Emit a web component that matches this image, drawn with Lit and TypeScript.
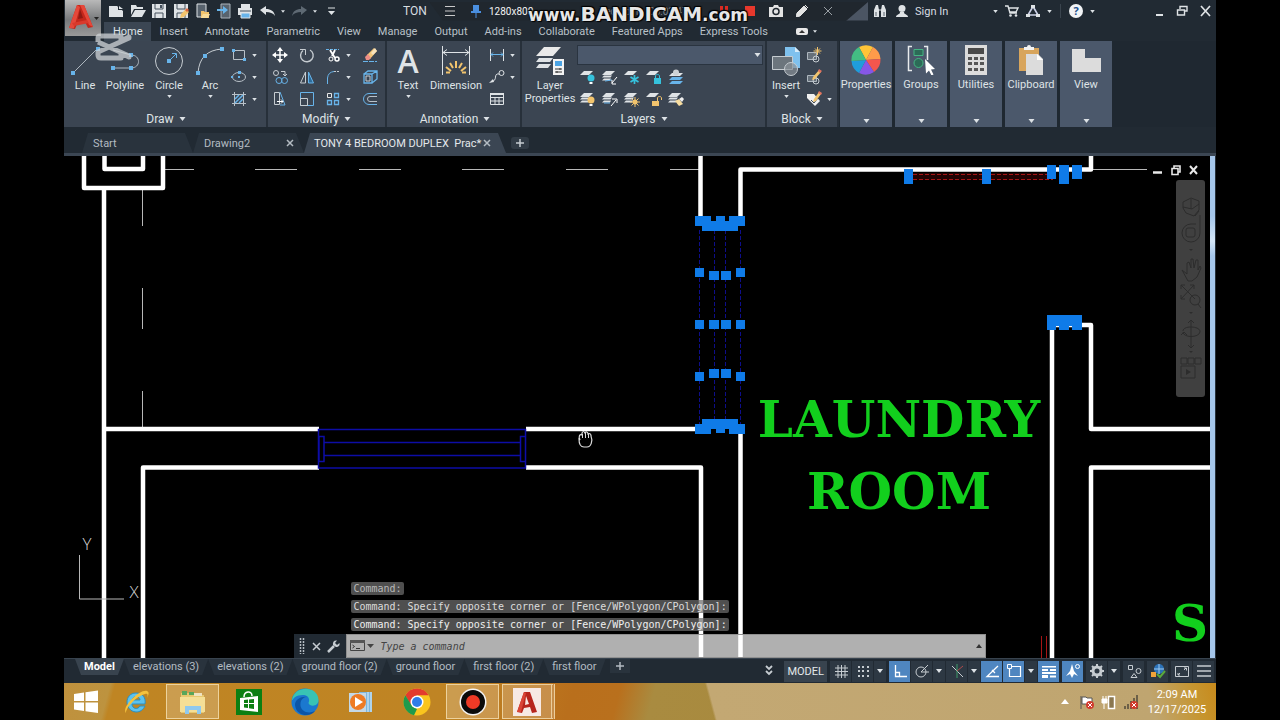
import { LitElement, html, svg, css, TemplateResult, SVGTemplateResult } from "lit";
import { customElement } from "lit/decorators.js";
import { classMap } from "lit/directives/class-map.js";

const icon = (w: number, h: number, body: SVGTemplateResult) =>
  html`<svg width=${w} height=${h} viewBox="0 0 ${w} ${h}" fill="none" aria-hidden="true">${body}</svg>`;

const caret = (w = 5) => html`<svg class="caret" width=${w} height=${w > 5 ? 4 : 3} viewBox="0 0 6 4" aria-hidden="true"><path d="M0 0h6L3 4z" fill="#dde2e6"/></svg>`;

const W = "#dfe3e6";
const B = "#68b4ea";
const Y = "#f2c46d";

/* ---------- shared pieces ---------- */
const sheets = (c = W) => svg`<path d="M4 2h9l-4 4H0z" fill="${c}"/><path d="M2 6.500h8l-1.500 2H0zM2 9.500h7l-1 2H0z" fill="${c}"/>`;
const sheet = svg`<path d="M4 2h9l-4 4H0z" fill="${W}"/>`;

const qat = {
  New: icon(16, 14, svg`<path d="M1 2h8l6 5v6H1z" fill="${W}"/><path d="M10 1v5h5" fill="#212a33"/><path d="M11 2v3h4z" fill="${W}"/>`),
  Open: icon(16, 14, svg`<path d="M1 1h5l1 2h6v2H4L1 11z" fill="${W}"/><path d="M5 6h11l-4 7H1z" fill="${W}"/>`),
  Save: icon(16, 16, svg`<path d="M1 1h14v14H1z" fill="${W}"/><path d="M4 1v5h8V1M4 15v-5h8v5" stroke="#44505c"/><path d="M9 2h2v3H9z" fill="#44505c"/>`),
  "Save As": icon(16, 16, svg`<path d="M1 1h14v14H1z" fill="${W}"/><path d="M4 1v5h8V1M4 15v-5h8v5" stroke="#44505c"/><path d="M7 15l1-4 5-5 3 3-5 5z" fill="${Y}"/><path d="M12 7l2-2 2 2-2 2z" fill="#d9653f"/>`),
  "Open from Web": icon(16, 16, svg`<path d="M3 1h9v13H3z" fill="#58636e" stroke="${W}"/><path d="M7 8h3l1 1h4v6H7z" fill="${Y}"/><path d="M9 11h7l-2 4H7z" fill="#f8dc9a"/>`),
  "Save to Web": icon(16, 16, svg`<path d="M5 1h9v14H5z" fill="#58636e" stroke="#aab3bb"/><path d="M1 6h6V3l5 4-5 4V8H1z" fill="${B}"/>`),
  Print: icon(16, 16, svg`<path d="M4 1h9v4H4z" fill="${W}"/><path d="M1 5h14v7H1z" fill="${W}"/><path d="M3 8h11" stroke="#44505c"/><path d="M4 10h9v5H4z" fill="${B}" stroke="${W}"/>`),
};

const undo = icon(15, 12, svg`<path d="M6 1v3c5 0 8 2 9 7-2-3-5-4-9-4v3L0 5z" fill="${W}"/>`);
const redo = icon(15, 12, svg`<path d="M9 1v3C4 4 1 6 0 11c2-3 5-4 9-4v3l6-5z" fill="#5e6973"/>`);

/* ---------- ribbon glyphs ---------- */
const big: Record<string, TemplateResult> = {
  Line: icon(30, 30, svg`<path d="M3 27L27 3" stroke="#aeb7bf"/><path d="M1 25h4v4H1zM26 1h4v4h-4z" fill="${B}"/>`),
  Polyline: icon(30, 30, svg`<path d="M3 22h18c10 0 10-13 0-13L3 4" stroke="#aeb7bf"/><path d="M1 20h4v4H1zM19 20h4v4h-4zM19 7h4v4h-4z" fill="${B}"/>`),
  Circle: icon(30, 30, svg`<circle cx="15" cy="15" r="13.500" stroke="#c6ccd1"/><path d="M15 15l7-7M18 7.500h4.500V12" stroke="${B}"/><path d="M13 13h4v4h-4z" fill="${B}"/>`),
  Arc: icon(30, 30, svg`<path d="M3 27C4 12 12 4 27 3" stroke="#c6ccd1"/><path d="M1 25h4v4H1zM8 8h4v4H8zM25 1h4v4h-4z" fill="${B}"/>`),
  Text: html`<span class="glyph-a">A</span>`,
  Dimension: icon(30, 30, svg`<path d="M1.500 0v29M28.500 0v29" stroke="${W}"/><path d="M2 6.500h26M6 3.500l-4 3 4 3M24 3.500l4 3-4 3" stroke="${W}"/><path d="M15 15v7M9 17l3 5M21 17l-3 5M5 21l5 4M25 21l-5 4M5 26.500h4M21 26.500h4" stroke="${Y}" stroke-width="2"/>`),
  "Layer Properties": icon(30, 30, svg`<path d="M9 1h17l-8 9H1z" fill="#e9e9e9"/><path d="M4 12h14l-3 4H1zM4 18h12l-3 4H1z" fill="${W}"/><path d="M18 13h11v16H18z" fill="#f3f3f3"/><path d="M20 15h7v5h-7z" fill="#4ba3e3"/><path d="M20 23h7M20 26h7M25 22v2M22 25v2" stroke="#333"/>`),
  Insert: icon(30, 30, svg`<path d="M14 1h10l5 5v16H14z" fill="#7fc1ee"/><path d="M24 1v5h5z" fill="#d7ecfa"/><path d="M1.500 10.500h20v13h-20z" fill="#6c757d" stroke="#c6ccd1"/><circle cx="20" cy="23" r="6.500" fill="#8a9299" fill-opacity=".7" stroke="#c6ccd1"/>`),
  Properties: icon(30, 30, svg`<path d="M15 15L8 2a15 15 0 0 1 14 0z" fill="#ffc438"/><path d="M15 15L22 2a15 15 0 0 1 7.500 12z" fill="#ff9b4a"/><path d="M15 15l14.500-1a15 15 0 0 1-6.500 13z" fill="#f4564d"/><path d="M15 15l8 12a15 15 0 0 1-15 1z" fill="#8657e6"/><path d="M15 15L8 28a15 15 0 0 1-7.500-12z" fill="#1f9ddb"/><path d="M15 15L.500 16A15 15 0 0 1 8 2z" fill="#43bd83"/>`),
  Groups: icon(30, 30, svg`<path d="M6 1.500H2.500v24H6M18 1.500h3.500V15" stroke="#e8ebed" stroke-width="1.500"/><path d="M8 4.500h9v6H8z" fill="#2c6b57" stroke="#45b583"/><circle cx="12.500" cy="18" r="4.500" fill="#2c6b57" stroke="#45b583"/><path d="M19 14l10 10-4 .500 2.500 5-2 1-2.500-5-3 3z" fill="#fff"/>`),
  Utilities: icon(30, 30, svg`<path d="M4 0h22v30H4z" fill="#dcdcdc"/><path d="M7 3h16v6H7z" fill="#4a4a4a"/><path d="M7 12h4v3H7zM13 12h4v3h-4zM19 12h4v3h-4zM7 17h4v3H7zM13 17h4v3h-4zM19 17h4v3h-4zM7 23h4v3H7zM13 23h4v3h-4zM19 23h4v3h-4z" fill="#555"/>`),
  Clipboard: icon(30, 30, svg`<path d="M3 3h20v23H3z" fill="#d8a55c"/><path d="M8 2h3a2 2 0 0 1 4 0h3v3H8z" fill="#f3f3f3"/><path d="M10 9h12l5 5v16H10z" fill="#dcdcdc"/><path d="M21 9v6h6z" fill="#fff"/>`),
  View: icon(30, 30, svg`<path d="M1 4h13v9h16v14H1z" fill="#dcdcdc"/>`),
};

const small: Record<string, TemplateResult> = {
  Rectangle: icon(16, 16, svg`<path d="M2.500 3.500h11v9h-11z" stroke="#b9c1c8"/><path d="M1 2h3v3H1zM12 11h3v3h-3z" fill="${B}"/>`),
  Ellipse: icon(16, 16, svg`<ellipse cx="8" cy="8" rx="6.500" ry="4.500" stroke="#b9c1c8"/><path d="M7 7h2v2H7zM0 7h2v2H0zM7 2h3v3H7z" fill="${B}"/>`),
  Hatch: icon(16, 16, svg`<path d="M3.500 1v14M12.500 1v14M1 3.500h14M1 12.500h14" stroke="#b9c1c8"/><path d="M4 8l4-4M4 12l8-8M8 12l4-4" stroke="${B}" stroke-width="1.500"/>`),
  Move: icon(16, 16, svg`<path d="M8 2v12M2 8h12" stroke="#fff" stroke-width="1.500"/><path d="M8 0l3 4H5zM8 16l-3-4h6zM0 8l4-3v6zM16 8l-4 3V5z" fill="#fff"/>`),
  Rotate: icon(16, 16, svg`<path d="M4 3.500A6.300 6.300 0 1 0 11 3" stroke="#c6ccd1" stroke-width="1.400"/><path d="M1 2.500h5.500V8" stroke="#c6ccd1"/>`),
  Trim: icon(16, 16, svg`<path d="M1 2.500h13" stroke="${B}" stroke-dasharray="3 1"/><path d="M5 3l5 8M10 3L7 9" stroke="#fff" stroke-width="1.800"/><circle cx="6" cy="12" r="2" stroke="#fff"/><circle cx="12" cy="12" r="2" stroke="#fff" stroke-width="1.500"/>`),
  Erase: icon(16, 16, svg`<path d="M1 14.500h14" stroke="${B}" stroke-dasharray="5 1"/><path d="M5 8l7-7 3 3-7 8z" fill="#f3c679"/><path d="M3 10l3-3 3 4-2 2H4z" fill="#ef8f86"/><path d="M9 6l4-5 2 3-4 4z" fill="#f7e2bc"/>`),
  Copy: icon(16, 16, svg`<circle cx="4" cy="4" r="2.500" stroke="#c6ccd1"/><path d="M9 2.500h4V7M11 5l2 2 2-2" stroke="#c6ccd1"/><circle cx="7" cy="11.500" r="3" stroke="${B}"/><circle cx="12.500" cy="11.500" r="3" stroke="${B}"/>`),
  Mirror: icon(16, 16, svg`<path d="M6.500 3v11h-5z" stroke="#c6ccd1"/><path d="M9.500 3v11h5z" stroke="${B}" fill="#2d6b99"/>`),
  Fillet: icon(16, 16, svg`<path d="M2.500 15V9C3 5 5 3 9 2.500" stroke="${B}"/><path d="M9 2.500h6" stroke="#c6ccd1" stroke-dasharray="2 1"/>`),
  Explode: icon(16, 16, svg`<path d="M2 5h8v9H2zM2 5l4-3h9v8l-5 4M10 5l5-3" stroke="${B}" stroke-width="1.300"/><path d="M4 7h4v5H4z" stroke="#c6ccd1"/>`),
  Stretch: icon(16, 16, svg`<path d="M2.500 1.500h5v12h-5z" stroke="#c6ccd1"/><path d="M8 1l5 13H8" stroke="${B}"/><path d="M5 10.500h6M9 8.500l2 2-2 2" stroke="#fff"/>`),
  Scale: icon(16, 16, svg`<path d="M1.500 1.500h13v13h-13z" stroke="${B}"/><path d="M1.500 7.500h7v7h-7z" stroke="#c6ccd1"/>`),
  Array: icon(16, 16, svg`<path d="M2.500 2.500h4v4h-4z" stroke="#e6e6e6"/><path d="M9.500 2.500h4v4h-4zM2.500 9.500h4v4h-4zM9.500 9.500h4v4h-4z" stroke="${B}" stroke-width="1.300"/>`),
  Offset: icon(16, 16, svg`<path d="M15 2.500H7a5.500 5.500 0 0 0 0 11h8" stroke="${B}"/><path d="M15 5.500H8a2.500 2.500 0 0 0 0 5h7" stroke="#b9c1c8"/>`),
  Linear: icon(16, 16, svg`<path d="M1.500 2v12M14.500 2v12" stroke="${W}"/><path d="M2 7.500h12M4 5.500l-2 2 2 2M12 5.500l2 2-2 2" stroke="${B}"/>`),
  Leader: icon(16, 16, svg`<circle cx="12.500" cy="4" r="2.500" stroke="${W}"/><path d="M10 5C4 4 9 12 3 12" stroke="${W}"/><path d="M0 14l4-4 1 3z" fill="${W}"/>`),
  Table: icon(16, 16, svg`<path d="M1.500 3.500h13v10h-13zM1.500 6.500h13M1.500 10h13M6 6v8M10 6v8" stroke="${W}"/><path d="M1 2h14v2H1z" fill="${W}"/>`),
  "Layer Off": icon(16, 16, svg`${sheet}<circle cx="11" cy="9" r="3.500" fill="#35c2dd"/><path d="M9.500 13h3v2h-3z" fill="#fff"/>`),
  "Layer Isolate": icon(16, 16, svg`${sheets()}<path d="M3 12l7-1" stroke="${B}"/><path d="M15 8l-5 6M10 11v4h4" stroke="#fff"/>`),
  "Layer Freeze": icon(16, 16, svg`${sheet}<path d="M10.500 6v9M6.500 8l8 5M14.500 8l-8 5" stroke="#35c2dd" stroke-width="1.700"/>`),
  "Layer Lock": icon(16, 16, svg`${sheet}<path d="M8 9h7v6H8z" fill="#35c2dd"/><path d="M9.500 9V7c0-2 4-2 4 0v2" stroke="#35c2dd"/>`),
  "Make Current": icon(16, 16, svg`<path d="M4 4h11l-3 3H1z" fill="${W}"/><path d="M4 8h11l-3 3H1zM4 12h11l-3 3H1z" fill="${B}"/><circle cx="8" cy="3.500" r="3" fill="#cdd2d6"/>`),
  "Layers On": icon(16, 16, svg`${sheets()}<circle cx="11" cy="9" r="3.500" fill="${Y}"/><path d="M9.500 13h3v2h-3z" fill="#fff"/>`),
  Unisolate: icon(16, 16, svg`${sheets()}<path d="M9 15l5-6M10 8h5v4" stroke="#fff"/><path d="M2 12h6" stroke="${B}"/>`),
  Thaw: icon(16, 16, svg`${sheets()}<circle cx="11" cy="11" r="2.500" fill="${Y}"/><path d="M11 6v10M6 11h10M7.500 7.500l7 7M14.500 7.500l-7 7" stroke="${Y}"/>`),
  Unlock: icon(16, 16, svg`${sheet}<path d="M6 10h7v5H6z" fill="${Y}"/><path d="M11.500 10V7c0-2 4-2 4 0v2" stroke="${Y}"/>`),
  Match: icon(16, 16, svg`${sheets()}<path d="M7 10l4-2 4 5-4 2z" fill="#f7dda0"/><path d="M11 8l3-2 2 2-2 3z" fill="#eee"/>`),
  "Create Block": icon(16, 16, svg`<path d="M1.500 5.500h9v7h-9z" fill="#66707a" stroke="#aeb7bf"/><circle cx="10" cy="12" r="3" stroke="#c6ccd1"/><path d="M11.500 0v8M7.500 4h8M9 1.500l5 5M14 1.500l-5 5" stroke="${Y}"/>`),
  "Edit Block": icon(16, 16, svg`<path d="M1.500 6.500h9v6h-9z" fill="#66707a" stroke="#aeb7bf"/><circle cx="10" cy="12" r="3" stroke="#c6ccd1"/><path d="M7 8l6-7 2 2-6 7-3 1z" fill="${Y}"/><path d="M12 2l1-2 3 2-2 2z" fill="#e2735f"/>`),
  "Edit Attributes": icon(16, 16, svg`<path d="M1 3h7l6 7-5 5-8-8z" fill="#f0f0f0"/><path d="M5 9l3 3 4-5" stroke="#3f4a55"/><path d="M8 8l5-7 2 2-5 7-3 1z" fill="${Y}"/><path d="M12 2l1-2 3 2-1 2z" fill="#e2735f"/>`),
};

const tool = (name: string, menu = false) => html`<button class="tool" title=${name} aria-label=${name}>${small[name]}${menu ? html`<i class="drop">${caret()}</i>` : ""}</button>`;
const bigTool = (name: string, cls: string, menu = false) => html`<button class=${"big " + cls}><i class="pic">${big[name]}</i><span class="name">${name}</span>${menu ? caret() : ""}</button>`;

const reset = css`
  :host, * { box-sizing: border-box; }
  button, input, select { font: inherit; color: inherit; background: none; border: 0; padding: 0; margin: 0; border-radius: 0; outline: none; }
  a { color: inherit; text-decoration: none; }
  svg { display: block; flex: none; }
  i { font-style: normal; }
`;

@customElement("title-area")
class TitleArea extends LitElement {
  static styles = [reset, css`
    :host { display: grid; grid-template-columns: 38px 1fr; background: #212a33; color: #d8dde1; position: relative; height: 41px; }
    .logo { width: 36px; height: 36px; margin-left: 1px; background: linear-gradient(#b9b9b9, #77797b 55%, #9a9a9a); display: flex; align-items: center; justify-content: center; }
    .bar { display: flex; align-items: center; height: 22px; padding-left: 6px; }
    .bar > * { flex: none; }
    .bar button { display: flex; align-items: center; justify-content: center; }
    .quick { display: flex; align-items: center; justify-content: space-between; width: 145px; }
    .history { display: flex; align-items: center; padding-left: 6px; }
    .history button { width: 16px; height: 16px; }
    .doc { font-size: 12px; margin-left: 64px; width: 26px; overflow: hidden; white-space: nowrap; }
    .recorder { display: flex; align-items: center; height: 19px; width: 439px; background: #20272e; clip-path: polygon(0 0, 100% 0, 100% 100%, 14px 100%); padding-left: 8px; color: #f3f3f3; }
    .recorder > * { flex: none; }
    .recorder button { width: 26px; height: 18px; }
    .recorder .size { width: 46px; font-size: 10px; }
    .recorder .clock { flex: 1; padding-left: 64px; color: #7d848a; font-size: 10px; white-space: nowrap; overflow: hidden; }
    .account { display: flex; align-items: center; font-size: 11px; gap: 6px; padding-left: 5px; }
    .account span { width: 34px; white-space: nowrap; }
    .store { display: flex; align-items: center; gap: 7px; margin-left: 44px; }
    .help { display: flex; align-items: center; gap: 7px; margin-left: 8px; padding-left: 8px; border-left: 1px solid #3a444e; }
    .window { display: flex; gap: 10px; margin-left: auto; padding-right: 4px; }
    nav { display: flex; align-items: center; height: 19px; padding-left: 2px; font-size: 11px; }
    nav a { height: 19px; line-height: 19px; padding: 0 8px 0 9px; white-space: nowrap; color: #b9c1c8; }
    nav a.on { background: #3b4653; color: #dfe3e6; }
    .toggle { display: flex; align-items: center; gap: 5px; margin-left: 20px; }
    .pill { width: 12px; height: 7px; border-radius: 2px; background: #e8e8e8; display: flex; align-items: center; justify-content: center; }
    .mark { position: absolute; left: 464px; top: 3px; font: bold 17px/23px "DejaVu Sans", sans-serif; color: #e6e6e6; text-shadow: 1px 1px 1px #000, -1px -1px 1px #000, 1px -1px 1px #000; white-space: nowrap; }
    .mark b { font-size: 20px; }
    .capcut { position: absolute; left: 30px; top: 32px; z-index: 3; opacity: .75; }
  `];
  render() {
    const tabs = ["Home", "Insert", "Annotate", "Parametric", "View", "Manage", "Output", "Add-ins", "Collaborate", "Featured Apps", "Express Tools"];
    return html`
      <button class="logo" aria-label="Application menu">${icon(34, 32, svg`<path d="M3 26L11 3h7l9 22-5 1-3-6-8 2-2 5z" fill="#c3271b"/><path d="M14 7l3 9-5 1z" fill="#8f1a13"/><path d="M3 26L11 3l3 2-6 21zM14 3h4l9 22-4-2z" fill="#e5483a"/><path d="M6 21l15-3 2 3-15 3z" fill="#d93a2c"/><path d="M28 15h5l-2.500 3z" fill="#222"/>`)}</button>
      <div>
        <div class="bar">
          <div class="quick">${Object.entries(qat).map(([n, g]) => html`<button aria-label=${n}>${g}</button>`)}</div>
          <div class="history">
            <button aria-label="Undo">${undo}</button><button aria-label="Undo list">${caret(4)}</button>
            <button aria-label="Redo">${redo}</button><button aria-label="Redo list">${caret(4)}</button>
            <button aria-label="Customize">${icon(9, 8, svg`<path d="M1 1h7" stroke="${W}"/><path d="M1 4h7L4.500 8z" fill="${W}"/>`)}</button>
          </div>
          <span class="doc">TON</span>
          <div class="recorder">
            <button aria-label="Menu">${icon(12, 12, svg`<path d="M1 1.500h10M1 6h10M1 10.500h10" stroke="#c9c9c9"/>`)}</button>
            <button aria-label="Pin">${icon(12, 15, svg`<path d="M3 1h6v6h2v2H1V7h2z" fill="#4a8fe0"/><path d="M6 9v5" stroke="#4a8fe0"/>`)}</button>
            <span class="size">1280x800</span>
            <span class="clock">Recording [00:03:47]</span>
            <button aria-label="Pause">${icon(10, 10, svg`<path d="M1 0h3v10H1zM6 0h3v10H6z" fill="#d92b22"/>`)}</button>
            <button aria-label="Stop">${icon(10, 10, svg`<path d="M0 0h10v10H0z" fill="#e8382c"/>`)}</button>
            <button aria-label="Screenshot">${icon(14, 12, svg`<path d="M0 2h4l1-2h4l1 2h4v10H0z" fill="#e3e3e3"/><circle cx="7" cy="6.500" r="3" fill="#e3e3e3" stroke="#20272e" stroke-width="1.500"/>`)}</button>
            <button aria-label="Draw">${icon(13, 12, svg`<path d="M0 12l1-4 7-7 3 3-7 7zM9 0l3 3" fill="#e3e3e3" stroke="#e3e3e3"/>`)}</button>
            <button aria-label="Close recorder">${icon(10, 10, svg`<path d="M1 1l8 8M9 1L1 9" stroke="#9aa0a5"/>`)}</button>
            ${icon(27, 19, svg`<path d="M27 0v19H5z" fill="#4b5563"/>`)}
          </div>
          <div class="account">
            <button aria-label="Search">${icon(14, 12, svg`<path d="M1 12V5l2-5h2l1 5v7zM8 12V5l1-5h2l2 5v7z" fill="${W}"/><path d="M5 5h4" stroke="${W}"/><path d="M3 7v4M11 7v4" stroke="#59636c"/>`)}</button>
            ${icon(16, 12, svg`<circle cx="9" cy="3.500" r="3.500" fill="${W}"/><path d="M3 12c0-3 4-2 4-5h4c0 3 4 2 4 5z" fill="${W}"/>`)}
            <span>Sign In</span>
          </div>
          <div class="store">${caret(5)}
            <button aria-label="Store">${icon(14, 12, svg`<path d="M0 1h3l2 7h7M4 3h9l-2 4H5" stroke="${W}" stroke-width="1.400"/><circle cx="5.500" cy="10.500" r="1.300" fill="${W}"/><circle cx="11" cy="10.500" r="1.300" fill="${W}"/>`)}</button>
            <button aria-label="Apps">${icon(14, 12, svg`<path d="M7 1.500L12 10H2z" stroke="#cdd2e8" stroke-width="1.600"/><path d="M0 9h4v3H0zM10 9h4v3h-4zM5 0h4v3H5z" fill="${W}"/>`)}</button>${caret(5)}
          </div>
          <div class="help">
            <button aria-label="Help"><svg width="14" height="14" viewBox="0 0 14 14"><circle cx="7" cy="7" r="7" fill="#f2f4f6"/><text x="7" y="11" text-anchor="middle" font-family="Open Sans" font-weight="700" font-size="11" fill="#1d4f8a">?</text></svg></button>${caret(5)}
          </div>
          <div class="window">
            <button aria-label="Minimize">${icon(13, 12, svg`<path d="M3 10h7" stroke="${W}" stroke-width="2"/>`)}</button>
            <button aria-label="Restore">${icon(13, 12, svg`<path d="M4 4V1.500h7V6H9M1.500 5h7v5h-7z" stroke="${W}" stroke-width="1.400"/>`)}</button>
            <button aria-label="Close">${icon(13, 12, svg`<path d="M2 1l9 10M11 1L2 11" stroke="${W}" stroke-width="1.700"/>`)}</button>
          </div>
        </div>
        <nav>
          ${tabs.map((t, i) => html`<a href="#" class=${classMap({ on: i === 0 })}>${t}</a>`)}
          <button class="toggle" aria-label="Ribbon display"><i class="pill">${icon(6, 3, svg`<path d="M0 3h6L3 0z" fill="#333"/>`)}</i>${caret(4)}</button>
        </nav>
      </div>
      <div class="mark">www.<b>BANDICAM</b>.com</div>
      <div class="capcut">${icon(38, 30, svg`<path d="M4 10V6q0-2 2-2h21v5l8-4v1L4 20v3q0 3 3 3h20v-5M4 10l31 14v1l-8-4" stroke="#cfd3d6" stroke-width="5" stroke-linejoin="round"/>`)}</div>`;
  }
}

@customElement("ribbon-bar")
class RibbonBar extends LitElement {
  static styles = [reset, css`
    :host { display: flex; height: 86px; background: #1f2831; color: #dfe3e6; font-size: 11px; }
    section { display: flex; flex-direction: column; background: #3b4552; border-right: 2px solid #27303a; flex: none; }
    .body { display: flex; height: 70px; padding-top: 3px; }
    h2 { margin: 0; font: inherit; font-size: 12px; line-height: 16px; display: flex; align-items: center; justify-content: center; gap: 5px; }
    .big { display: flex; flex-direction: column; align-items: center; padding-top: 2px; line-height: 13px; flex: none; }
    .name { padding-top: 3px; }
    .big .caret { margin-top: 3px; }
    .pic { height: 30px; display: flex; align-items: center; }
    .glyph-a { font: 600 32px/30px "Open Sans", sans-serif; }
    .tools { display: grid; grid-auto-rows: 22px; align-content: start; }
    .tool { display: flex; align-items: center; }
    .drop { padding-left: 5px; }
    .draw { width: 204px; padding-left: 2px; }
    .w38 { width: 38px; } .w42 { width: 42px; } .w46 { width: 46px; } .w36 { width: 36px; } .w54 { width: 54px; }
    .draw .tools { padding-left: 3px; }
    .modify { width: 119px; }
    .modify .tools { grid-template-columns: 27px 26px 37px 18px; padding-left: 4px; }
    .annotate { width: 135px; padding-left: 3px; }
    .annotate .w54 { margin-left: 3px; }
    .annotate .tools { padding-left: 6px; }
    .layers { width: 245px; padding-left: 1px; }
    .layers .tools { grid-template-columns: repeat(5, 22px); padding-left: 3px; }
    .combo { width: 186px; height: 20px; background: #4b586b; border: 1px solid #2a3440; appearance: none; display: block; }
    .pick { position: relative; height: 22px; padding-top: 1px; }
    .pick svg { position: absolute; right: 2px; top: 9px; pointer-events: none; }
    .block { width: 72px; }
    .block .tools { padding-left: 1px; }
    .folded { display: flex; gap: 3px; padding-left: 1px; }
    .fold { width: 52px; background: #4b586b; display: flex; flex-direction: column; align-items: center; padding-top: 4px; line-height: 13px; }
    .fold span { padding-top: 3px; flex: 1; }
    .fold > svg:last-child { margin-bottom: 4px; }
  `];
  render() {
    const head = (t: string) => html`<h2>${t}${caret(7)}</h2>`;
    return html`
      <section class="draw"><div class="body">
        ${bigTool("Line", "w38")}${bigTool("Polyline", "w42")}${bigTool("Circle", "w46", true)}${bigTool("Arc", "w36", true)}
        <div class="tools">${tool("Rectangle", true)}${tool("Ellipse", true)}${tool("Hatch", true)}</div>
      </div>${head("Draw")}</section>
      <section class="modify"><div class="body"><div class="tools">
        ${tool("Move")}${tool("Rotate")}${tool("Trim", true)}${tool("Erase")}
        ${tool("Copy")}${tool("Mirror")}${tool("Fillet", true)}${tool("Explode")}
        ${tool("Stretch")}${tool("Scale")}${tool("Array", true)}${tool("Offset")}
      </div></div>${head("Modify")}</section>
      <section class="annotate"><div class="body">
        ${bigTool("Text", "w36", true)}${bigTool("Dimension", "w54")}
        <div class="tools">${tool("Linear", true)}${tool("Leader", true)}${tool("Table")}</div>
      </div>${head("Annotation")}</section>
      <section class="layers"><div class="body">
        ${bigTool("Layer Properties", "w54")}
        <div>
          <div class="pick"><select class="combo" aria-label="Layer"></select>${caret(7)}</div>
          <div class="tools">
            ${["Layer Off", "Layer Isolate", "Layer Freeze", "Layer Lock", "Make Current", "Layers On", "Unisolate", "Thaw", "Unlock", "Match"].map((n) => tool(n))}
          </div>
        </div>
      </div>${head("Layers")}</section>
      <section class="block"><div class="body">
        ${bigTool("Insert", "w38", true)}
        <div class="tools">${tool("Create Block")}${tool("Edit Block")}${tool("Edit Attributes", true)}</div>
      </div>${head("Block")}</section>
      <div class="folded">${["Properties", "Groups", "Utilities", "Clipboard", "View"].map((n) => html`<button class="fold">${big[n]}<span>${n}</span>${caret(7)}</button>`)}</div>`;
  }
}

@customElement("file-tabs")
class FileTabs extends LitElement {
  static styles = [reset, css`
    :host { display: flex; align-items: flex-end; height: 29px; padding: 0 0 3px 18px; font-size: 11px; color: #b3bbc2; background: linear-gradient(#212a33 26px, #3b4653 26px); }
    .tab { display: flex; align-items: center; justify-content: space-between; width: 111px; height: 20px; padding: 0 10px 0 11px; background: #29333d; clip-path: polygon(6px 0, calc(100% - 8px) 0, 100% 100%, 0 100%); white-space: pre; }
    .tab.on { width: 202px; background: #3b4653; color: #e4e8eb; padding: 0 15px 0 10px; }
    .add { width: 18px; height: 12px; margin: 0 0 4px 5px; background: #323c46; border-radius: 3px; display: flex; align-items: center; justify-content: center; }
  `];
  render() {
    const x = html`<button aria-label="Close tab">${icon(8, 8, svg`<path d="M1 1l6 6M7 1L1 7" stroke="#b3bbc2" stroke-width="1.500"/>`)}</button>`;
    return html`<div class="tab"><a href="#">Start</a></div><div class="tab"><a href="#">Drawing2</a>${x}</div><div class="tab on"><a href="#">TONY 4 BEDROOM DUPLEX  Prac*</a>${x}</div>
      <button class="add" aria-label="New tab">${icon(8, 8, svg`<path d="M4 0v8M0 4h8" stroke="#c6ccd1" stroke-width="1.500"/>`)}</button>`;
  }
}

@customElement("drawing-canvas")
class DrawingCanvas extends LitElement {
  static styles = [reset, css`
    :host { display: block; position: relative; flex: 1; min-height: 0; background: #000; overflow: hidden; }
    .plan { width: 100%; height: 100%; }
    .room { font: bold 50px "DejaVu Serif", serif; fill: #12cf1d; text-anchor: middle; }
    .axis { font: 300 17px "Open Sans", sans-serif; fill: #d5d5d5; text-anchor: middle; }
    .edge { position: absolute; right: 1px; top: 0; bottom: 0; width: 5px; background: linear-gradient(#a5c6ea, #a5c6ea 60px, #d4e6f7 85px, #a5c6ea 100px); box-shadow: 1px 0 #26303a; }
    .frame { position: absolute; right: 17px; top: 8px; display: flex; gap: 7px; }
    .frame button { height: 12px; }
    .navbar { position: absolute; right: 11px; top: 24px; width: 29px; height: 217px; background: #404040; border-radius: 3px; display: flex; flex-direction: column; align-items: center; padding: 15px 0 18px; justify-content: space-between; }
    .console { position: absolute; left: 20%; bottom: 0; width: 60%; font-family: "DejaVu Sans Mono", monospace; font-size: 10px; }
    .log { display: flex; flex-direction: column; align-items: flex-start; gap: 5px; padding: 0 0 3px 57px; }
    .log p { margin: 0; line-height: 13px; height: 13px; padding: 0 2px; border-radius: 2px; background: rgba(110, 110, 110, .72); color: #f0f0f0; white-space: nowrap; }
    .log .old { color: #b8b8b8; }
    .log .mid { color: #dcdcdc; }
    .entry { display: flex; height: 24px; }
    .side { display: flex; align-items: center; justify-content: space-between; width: 52px; padding: 0 6px 0 5px; background: #212a33; }
    .field { flex: 1; display: flex; align-items: center; gap: 2px; background: rgba(255, 255, 255, .69); border: 1px solid #909090; padding: 0 3px; }
    .field input { flex: 1; font-style: italic; color: #333; padding-left: 4px; height: 20px; }
    .field input::placeholder { color: #444; opacity: 1; }
  `];
  render() {
    const g = (x: number, y: number, w = 9, h = 9) => svg`<rect x=${x} y=${y} width=${w} height=${h}/>`;
    return html`
      <svg class="plan" viewBox="64 156 1152 502" preserveAspectRatio="xMinYMin slice" role="img" aria-label="Floor plan">
        <g stroke="#b8b8b8" fill="none" stroke-width="1">
          <path d="M165 169.500h29M255 169.500h42M359 169.500h42M462 169.500h42M566 169.500h42M670 169.500h29M1092 169.500h55"/>
          <path d="M142.500 190v36M142.500 288v41M142.500 391v37"/>
        </g>
        <g stroke="#0e0e8a" stroke-dasharray="4 2" fill="none"><path d="M699.500 230v195M714.500 230v192M725.500 230v192M740.500 230v195"/></g>
        <g stroke="#fff" stroke-width="4.500" fill="none" stroke-linejoin="round">
          <path d="M84 156v32h79v-32M104.500 156v13h38.500v-13M104 188v470M104 429h215M526 429h172M319 467.500H143V658M526 467.500h175V658M700.500 156v62M740.500 218v-48.500H1091V156M740.500 432v226M1052 658V325h39v104h119M1091 658V467.500h119"/>
        </g>
        <path d="M913 173h135v7H913z" fill="#220303"/>
        <g stroke="#a51616" fill="none"><path d="M913 174.500h140M913 179.500h140" stroke-dasharray="4 2"/><path d="M1041.500 636v22M1046.500 636v22"/></g>
        <g stroke="#0d0da6" fill="none" stroke-width="1.500"><path d="M318.500 429.500h207v38.500h-207zM319 436.500h5v25h-5zM520.500 436.500h5v25h-5zM324 442.500h196M324 455.500h196"/></g>
        <g fill="#0f7be8">
          ${g(695, 216, 16, 10)}${g(716, 216)}${g(729, 216, 16, 10)}${g(702, 221, 36, 10)}
          ${g(695, 424, 16, 10)}${g(716, 424)}${g(729, 424, 16, 10)}${g(702, 419, 36, 10)}
          ${[[268, 271], [320, 320], [372, 369]].map(([a, b]) => svg`${g(695, a)}${g(736, a)}${g(709, b, 10)}${g(721, b, 10)}`)}
          ${g(904, 169, 9, 15)}${g(982, 169, 9, 15)}${g(1047, 165, 9, 14)}${g(1059, 165, 10, 19)}${g(1072, 165, 10, 14)}
          ${g(1047, 315, 35, 11)}${g(1047, 315, 9, 15)}${g(1059, 315, 10, 15)}${g(1072, 315, 10, 15)}
        </g>
        <text class="room" x="899" y="437">LAUNDRY</text>
        <text class="room" x="899" y="509">ROOM</text>
        <text class="room" x="1190" y="641">S</text>
        <path d="M79.500 555v44H124" stroke="#b8b8b8" fill="none"/>
        <text class="axis" x="87" y="550">Y</text><text class="axis" x="134" y="598">X</text>
        <path d="M580 440c-2-4 0-6 2-5v-2c1-2 2-2 3 0 1-2 3-1 3 1 2-1 3 0 3 2 2 5 0 11-4 11h-3c-3 0-5-3-5-8z" fill="#000" stroke="#dcdcdc" stroke-width="1.200"/>
        <path d="M582.500 434v4M585.500 433v5M588.500 434v4" stroke="#dcdcdc"/>
      </svg>
      <div class="edge"></div>
      <div class="frame">
        <button aria-label="Minimize view">${icon(11, 12, svg`<path d="M1 8.500h9" stroke="#e8e8e8" stroke-width="2.500"/>`)}</button>
        <button aria-label="Restore view">${icon(11, 12, svg`<path d="M4 4V2h6v6H8M2 4.500h6v6H2z" stroke="#e8e8e8" stroke-width="1.600"/>`)}</button>
        <button aria-label="Close view">${icon(11, 12, svg`<path d="M2 2l7 8M9 2l-7 8" stroke="#e8e8e8" stroke-width="2"/>`)}</button>
      </div>
      <div class="navbar">${icon(24, 184, svg`<g stroke="#2c2c2c">
        <path d="M4 7l8-4 8 3v9l-5 6-8-3-3-5zM4 12l9 2 7-5M12 4v10M16 21l4-5"/>
        <path d="M21 20v18a9 9 0 1 1-9-9h5"/><rect x="7" y="33" width="9" height="9" rx="2"/>
        <path d="M3 75l5 4V68l2-1 2 6V64h2l1 9 2-8h2v10l2-4 1 2-4 9-5 4H9z"/>
        <path d="M2 90l14 14M15 90L2 104M2 94v-4h4M11 90h4v4M2 100v4h4"/><circle cx="16" cy="105" r="5"/><path d="M19 109l3 4"/>
        <path d="M12 125v28M9 128l3-3 3 3M9 150l3 3 3-3M4 136c0-6 18-5 17 1s-17 6-17 0M2 140l3-3 3 3"/>
        <path d="M2 163h6v6H2zM9 163h6v6H9zM16 163h6v6h-6zM2 171h14v12H2z"/></g>
        <path d="M7 174l5 3-5 3zM10 54h4l-2 2zM10 117h4l-2 2zM10 156h4l-2 2z" fill="#2c2c2c"/>`)}</div>
      <div class="console">
        <div class="log">
          <p class="old">Command:</p>
          <p class="mid">Command: Specify opposite corner or [Fence/WPolygon/CPolygon]:</p>
          <p>Command: Specify opposite corner or [Fence/WPolygon/CPolygon]:</p>
        </div>
        <div class="entry">
          <div class="side">
            ${icon(6, 16, svg`<path d="M1.500 0v16M4.500 0v16" stroke="#b5bcc2" stroke-width="1.500" stroke-dasharray="2 1"/>`)}
            <button aria-label="Close command line">${icon(9, 9, svg`<path d="M1 1l7 7M8 1L1 8" stroke="#c6ccd1" stroke-width="1.500"/>`)}</button>
            <button aria-label="Customize command line">${icon(13, 13, svg`<path d="M1 12l6-6" stroke="#c6ccd1" stroke-width="2.500"/><path d="M12.500 3l-2.500 2-2-2L10 .500C7 0 5.500 2 6 5l3 2c3 0 4-2 3.500-4z" fill="#c6ccd1"/>`)}</button>
          </div>
          <div class="field">
            ${icon(15, 12, svg`<path d="M.500 .500h14v10H.500z" stroke="#444"/><path d="M0 0h15v3H0z" fill="#555"/><path d="M2.500 5l2 1.500-2 1.500M6 8.500h4" stroke="#333"/>`)}
            ${icon(7, 4, svg`<path d="M0 0h7L3.500 4z" fill="#444"/>`)}
            <input type="text" placeholder="Type a command" aria-label="Command" />
            ${icon(6, 4, svg`<path d="M0 4h6L3 0z" fill="#333"/>`)}
          </div>
        </div>
      </div>`;
  }
}

@customElement("status-bar")
class StatusBar extends LitElement {
  static styles = [reset, css`
    :host { display: flex; height: 25px; background: #212a33; border-top: 1px solid #38434e; color: #b3bbc2; font-size: 11px; }
    nav { display: flex; padding-left: 11px; }
    nav a { height: 16px; line-height: 15px; padding: 0 9px; background: #29333d; clip-path: polygon(0 0, 100% 0, calc(100% - 6px) 100%, 6px 100%); white-space: nowrap; }
    nav a.on { font-weight: 700; color: #fff; background: #38434e; }
    .add { width: 20px; height: 14px; margin-left: 4px; background: #29333d; display: flex; align-items: center; justify-content: center; }
    .modes { display: flex; align-items: center; margin-left: auto; gap: 1px; padding-right: 2px; }
    .modes button { height: 21px; min-width: 21px; background: #2d3843; display: flex; align-items: center; justify-content: center; }
    .modes .more { background: none; margin-right: 4px; }
    .modes .model { padding: 0 3px; color: #e4e8eb; background: #38434e; }
    .modes .slim { min-width: 12px; }
    .modes .on { background: #4f86c0; }
    .modes .apart { margin-left: 2px; }
  `];
  render() {
    const c = "#c6ccd1";
    const b = (name: string, body: SVGTemplateResult, cls = "") => html`<button class=${cls} aria-label=${name}>${icon(16, 16, body)}</button>`;
    const drop = html`<button class="slim" aria-label="Options">${caret(6)}</button>`;
    const tabs = ["Model", "elevations (3)", "elevations (2)", "ground floor (2)", "ground floor", "first floor (2)", "first floor"];
    return html`
      <nav>${tabs.map((t, i) => html`<a href="#" class=${classMap({ on: i === 0 })}>${t}</a>`)}
        <button class="add" aria-label="New layout">${icon(8, 8, svg`<path d="M4 0v8M0 4h8" stroke="#b3bbc2" stroke-width="1.500"/>`)}</button></nav>
      <div class="modes">
        ${b("More", svg`<path d="M5 3l3 3 3-3M5 8l3 3 3-3" stroke="${c}" stroke-width="1.800"/>`, "more")}
        <button class="model">MODEL</button>
        ${b("Grid", svg`<path d="M5 2v13M8.500 2v13M12 2v13M2 5h13M2 8.500h13M2 12h13" stroke="${c}"/>`, "apart")}
        ${b("Snap", svg`<g fill="${c}"><path d="M3 3h2v2H3zM7 3h2v2H7zM12 3h2v2h-2zM3 7h2v2H3zM7 7h2v2H7zM12 7h2v2h-2zM3 12h2v2H3zM7 12h2v2H7zM12 12h2v2h-2z"/></g>`)}${drop}
        ${b("Ortho", svg`<path d="M3.500 2v11.500H15M3.500 9.500h4v4" stroke="#fff" stroke-width="1.300"/>`, "on apart")}
        ${b("Polar", svg`<circle cx="7" cy="9" r="5" stroke="${c}"/><path d="M7 9l7-7M7 9h8" stroke="${c}"/>`)}${drop}
        ${b("Isodraft", svg`<path d="M3 3l11 11" stroke="${c}"/><path d="M8 1v14" stroke="#3f9a6b"/><path d="M8 8l6-5" stroke="#b14a4a"/>`)}${drop}
        ${b("Object snap tracking", svg`<path d="M14 3L3 13.500h12M8 7l3 3" stroke="#fff" stroke-width="1.300"/>`, "on")}
        ${b("Object snap", svg`<path d="M5 3.500h9.500v10h-11V6" stroke="#fff" stroke-width="1.200"/><path d="M1.500 1.500h4v4h-4z" fill="#4f86c0" stroke="#fff"/>`, "on")}${drop}
        ${b("Lineweight", svg`<path d="M1 3h14v1.500H1zM1 6h6v2H1zM9 6h6v2H9zM1 9h14v2H1zM1 12h6v3H1zM9 12.500h6v2H9z" fill="#fff"/>`, "on")}
        ${b("Annotation scale", svg`<path d="M7 1l2 7 4 5-4-2-2 4-2-4-4 2 4-5z" fill="#fff"/><circle cx="12.500" cy="3.500" r="2" stroke="#fff"/>`, "on apart")}
        ${b("Workspace", svg`<circle cx="8" cy="8" r="4" stroke="${c}" stroke-width="3"/><path d="M8 1v3M8 12v3M1 8h3M12 8h3M3 3l2 2M11 11l2 2M13 3l-2 2M5 11l-2 2" stroke="${c}" stroke-width="2"/>`, "apart")}${drop}
        ${b("Isolate", svg`<path d="M2.500 2.500h4v4h-4zM5 14.500l3-4 3 4z" stroke="${c}"/><circle cx="12.500" cy="8" r="2.500" stroke="${c}"/>`, "apart")}
        ${b("Geolocation", svg`<circle cx="9" cy="6" r="5" fill="#2c72b8"/><path d="M4 6h10M9 1v10" stroke="#9ccaf0"/><path d="M1 9h5v5H1z" fill="#f0a33a"/><path d="M7 11l3 3 5-6" stroke="#5aa83c" stroke-width="2"/>`, "apart")}
        ${b("Clean screen", svg`<path d="M1.500 3.500h13v10h-13z" stroke="${c}"/><path d="M4 10v2h2M10 5h2.500v2.500M4 12l2-2M12 5l-2 2" stroke="${c}"/>`, "apart")}
        ${b("Customize", svg`<path d="M1 3h14M1 8h14M1 13h14" stroke="${c}" stroke-width="1.500"/>`)}
      </div>`;
  }
}

@customElement("task-bar")
class TaskBar extends LitElement {
  static styles = [reset, css`
    :host { display: flex; height: 37px; overflow: hidden; color: #fff; font-size: 11px;
      background: linear-gradient(75deg, transparent 56%, #c3a873 56.2%, #bfa570 94%, #c6952f 98%, #c78a1c 100%),
        linear-gradient(105deg, #c0913d 0, #bd933f 45px, #bf8523 50px, #bf8424 34%, #b96f1c 44%, #b9701d 48%, #a98b40 51%, #a88a3e 60%); }
    .app { width: 53px; height: 35px; margin: 1px 1px 0 2px; display: flex; align-items: center; justify-content: center; }
    .app.open { background: rgba(255, 255, 255, .2); border: 1px solid rgba(255, 240, 200, .65); }
    .app.stacked { border-right: 4px double rgba(255, 240, 200, .65); }
    .start { width: 44px; display: flex; align-items: center; justify-content: center; }
    .apps { display: flex; }
    .tray { display: flex; align-items: center; gap: 6px; margin-left: auto; padding-right: 7px; }
    .tray time { width: 64px; text-align: center; line-height: 15px; }
    .up { margin-right: 4px; }
    .date { display: block; }
  `];
  render() {
    const apps: [string, SVGTemplateResult, string][] = [
      ["Internet Explorer", svg`<path d="M22 18c-2 4-5 6-9 6-12-1-12-19 0-19 7 0 10 5 9 11H9c0 5 6 6 8 2zM9 12h8c0-4-7-5-8 0z" fill="#5cc2ee" stroke="#2c8fc0" fill-rule="evenodd"/><path d="M3 25C-2 20 16 1 24 3c3 1 1 5 0 7 1-3 1-5-2-4C14 8 3 19 3 25z" fill="#f5c23d"/>`, ""],
      ["File Explorer", svg`<path d="M2 5h8l2 2h13v18H2z" fill="#e8c86f"/><path d="M3 3h5v4H3zM10 4h5v3h-5z" fill="#58a65a"/><path d="M15 5h8v3h-8z" fill="#efe3c0"/><path d="M1 9h25v15H1z" fill="#f5df96"/><path d="M6 26v-8h16v8h-4v-4h-8v4z" fill="#8fc9ee"/>`, "open"],
      ["Store", svg`<path d="M1 1h26v26H1z" fill="#0c7f12"/><path d="M5 10l18-2v16L5 22z" fill="#fff"/><path d="M9 9c0-6 8-7 8-1" stroke="#fff" stroke-width="1.500"/><path d="M9 12l4-.500V15H9zM14 11.500l5-.500v4h-5zM9 16h4v4l-4-.500zM14 16h5v5l-5-.700z" fill="#0c7f12"/>`, ""],
      ["Edge", svg`<circle cx="14" cy="14" r="13.500" fill="#1b78cf"/><path d="M1 12C3-3 27-3 27.500 12c0 7-9 7-10 3 2-5-1-8-6-8-6 0-9 3-10 5z" fill="#38c3b4"/><path d="M10 13c-3 9 6 14 14 10-5 7-19 5-20-6 0-6 7-9 12-8-3 0-5 2-6 4z" fill="#0d55a6"/>`, ""],
      ["Media Player", svg`<path d="M12 4h13v20H12z" fill="#7db7de"/><path d="M21 4v20M24 4v20" stroke="#e1f0fa"/><path d="M2 5h17v19H2z" fill="#c4d8e6"/><circle cx="11" cy="14" r="8" fill="#ee7b24"/><path d="M8 9l8 5-8 5z" fill="#fff"/>`, ""],
      ["Chrome", svg`<circle cx="14" cy="14" r="13.500" fill="#f9c51e"/><path d="M2.300 7.300A13.500 13.500 0 0 1 25.700 7.300H14l-6 10z" fill="#e33b2e"/><path d="M2.300 7.300L9 18l5 3-3 6.300A13.500 13.500 0 0 1 2.300 7.300z" fill="#1f9a4c"/><circle cx="14" cy="14" r="6.500" fill="#fff"/><circle cx="14" cy="14" r="5" fill="#2f7de8"/>`, ""],
      ["Bandicam", svg`<circle cx="14" cy="14" r="13.500" fill="#f4f4f4"/><circle cx="14" cy="14" r="12" fill="#0b0b0b"/><circle cx="14" cy="14" r="7" fill="#ee3a26"/>`, "open"],
      ["AutoCAD", svg`<path d="M0 0h28v28H0z" fill="#f7e9e4"/><path d="M4 24L11 4h6l7 20-5 1-2-6-6 1-2 5z" fill="#b7251c"/><path d="M13 8l3 8-4 1z" fill="#f7e9e4"/><path d="M4 24L11 4l2 1-5 19z" fill="#d94436"/>`, "open stacked"],
    ];
    return html`
      <button class="start" aria-label="Start">${icon(24, 24, svg`<path d="M0 4l10-1.500V11H0zM11.500 2.300L24 .500V11H11.500zM0 12.500h10V21L0 19.500zM11.500 12.500H24v10.500l-12.500-1.800z" fill="#fff"/>`)}</button>
      <div class="apps">${apps.map(([n, g, state]) => html`<button class=${"app " + state} aria-label=${n}>${icon(28, 28, g)}</button>`)}</div>
      <div class="tray">
        <i class="up">${icon(8, 5, svg`<path d="M0 5h8L4 0z" fill="#fff"/>`)}</i>
        ${icon(16, 16, svg`<path d="M2 2v13M3 3h4l1 1h5v7H8l-1-1H3z" fill="#fff" stroke="#555"/><circle cx="11" cy="11" r="4" fill="#d13a2c"/><path d="M9 9l4 4M13 9l-4 4" stroke="#fff"/>`)}
        ${icon(16, 16, svg`<path d="M7.500 2.500h6v12h-6z" fill="#8a7750" stroke="#fff" stroke-width="1.500"/><path d="M1 5h5v4H1zM3 9v6M2 2v3M5 2v3" fill="#fff" stroke="#fff"/>`)}
        ${icon(16, 16, svg`<path d="M1 12h2v3H1zM4 10h2v5H4zM7 7h2v8H7zM10 4h2v11h-2zM13 1h2v14h-2z" fill="#6c6048"/><circle cx="11" cy="11" r="4" fill="#d13a2c"/><path d="M9 9l4 4M13 9l-4 4" stroke="#fff"/>`)}
        <time>2:09 AM<span class="date">12/17/2025</span></time>
      </div>`;
  }
}

@customElement("app-root")
class AppRoot extends LitElement {
  static styles = css`
    :host { display: flex; flex-direction: column; height: 100vh; padding: 0 5%; box-sizing: border-box; background: #000; overflow: hidden; font-family: Roboto, "Open Sans", sans-serif; }
  `;
  render() {
    return html`<title-area></title-area><ribbon-bar></ribbon-bar><file-tabs></file-tabs><drawing-canvas></drawing-canvas><status-bar></status-bar><task-bar></task-bar>`;
  }
}
